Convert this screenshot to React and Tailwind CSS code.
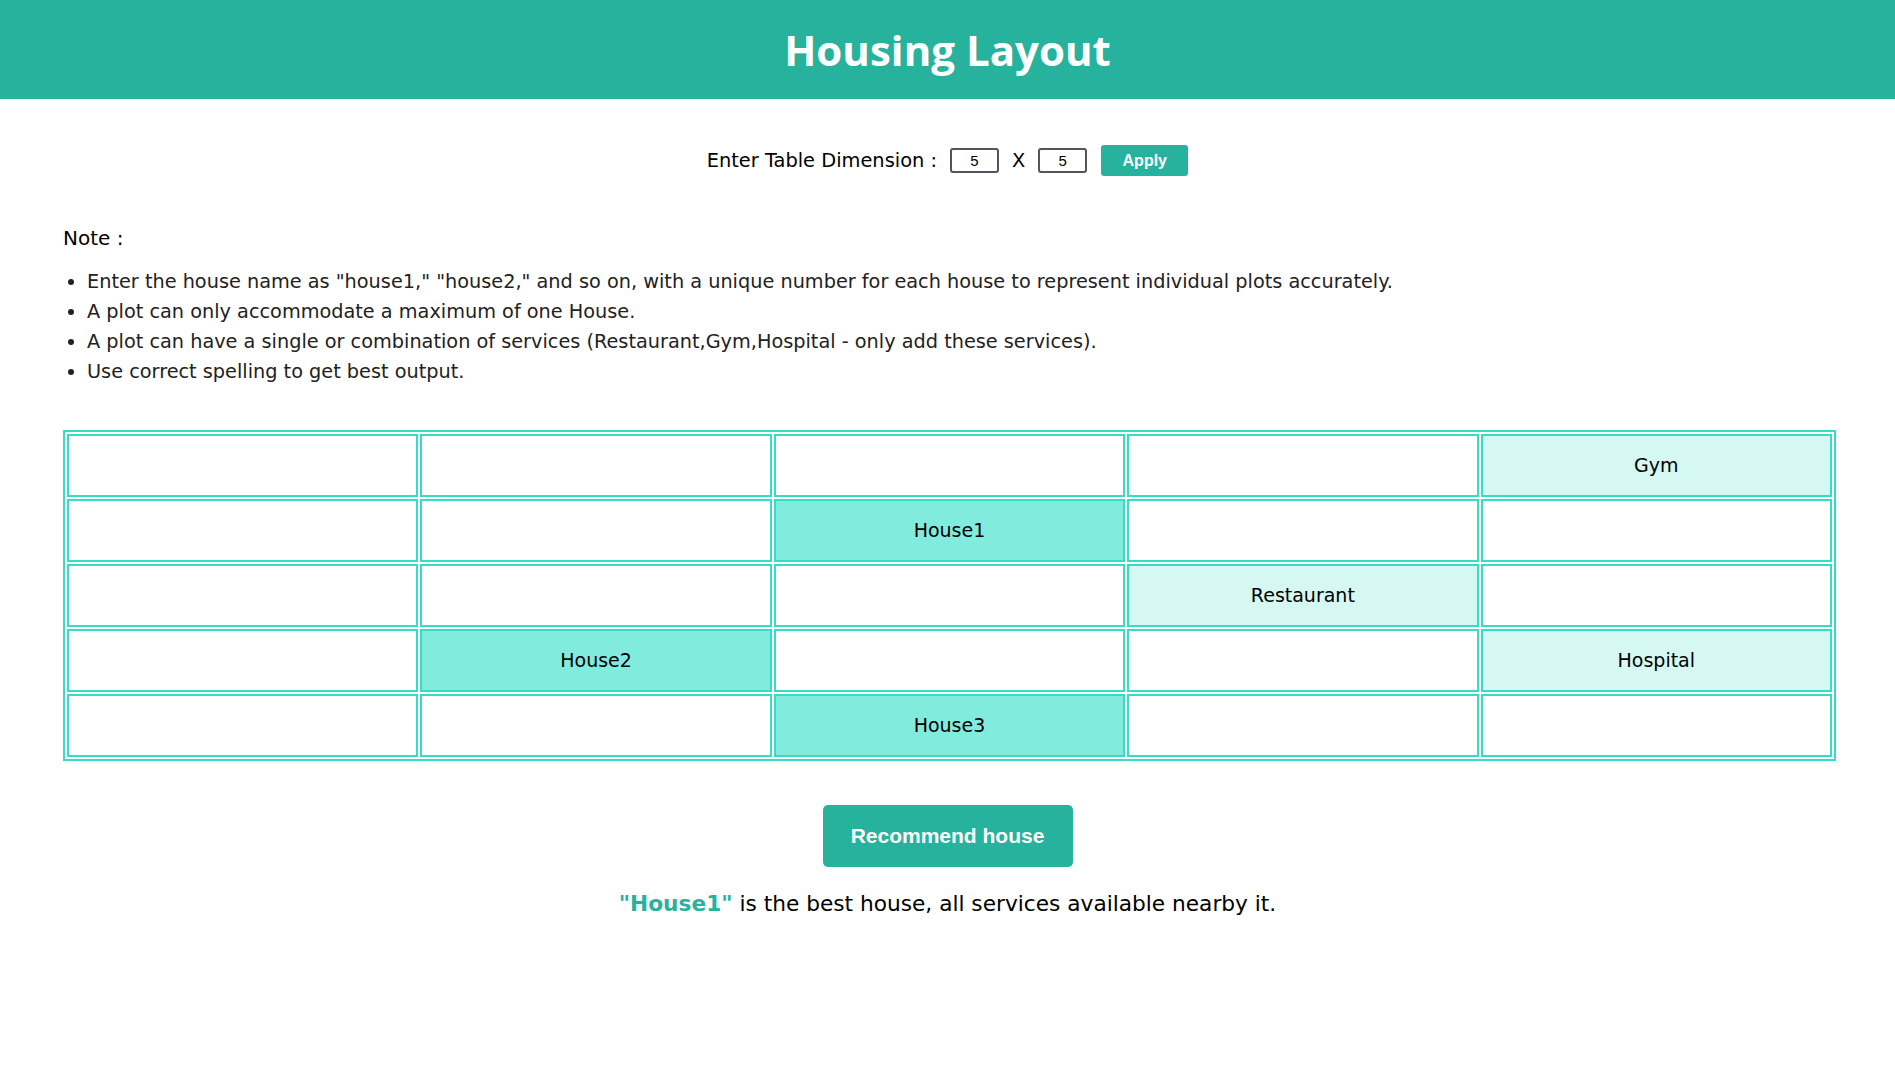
import { useState } from 'react'

const grid = [
  ['', '', '', '', 'Gym'],
  ['', '', 'House1', '', ''],
  ['', '', '', 'Restaurant', ''],
  ['', 'House2', '', '', 'Hospital'],
  ['', '', 'House3', '', ''],
]

const notes = [
  'Enter the house name as "house1," "house2," and so on, with a unique number for each house to represent individual plots accurately.',
  'A plot can only accommodate a maximum of one House.',
  'A plot can have a single or combination of services (Restaurant,Gym,Hospital - only add these services).',
  'Use correct spelling to get best output.',
]

const cellClass = (value) => {
  if (value.toLowerCase().startsWith('house')) return 'bg-[#81ecdd]'
  if (value) return 'bg-[#d5f8f2]'
  return 'bg-white'
}

const App = () => {
  const [rows, setRows] = useState('5')
  const [cols, setCols] = useState('5')

  return (
    <div className="min-h-screen bg-white text-black font-['DejaVu_Sans',sans-serif]">
      <header className="flex h-[99px] items-center justify-center bg-[#27b29d]">
        <h1 className="font-['Open_Sans',sans-serif] text-[42px] font-bold text-white">Housing Layout</h1>
      </header>

      <div className="mt-[46px] flex h-[31px] items-center justify-center text-[19.4px]">
        <span>Enter Table Dimension :</span>
        <input
          value={rows}
          onChange={(e) => setRows(e.target.value)}
          className="ml-[13px] h-[25px] w-[49px] rounded-[3px] border-2 border-[#555] text-center font-['Liberation_Sans',sans-serif] text-[15px] outline-none"
        />
        <span className="mx-[13px]">X</span>
        <input
          value={cols}
          onChange={(e) => setCols(e.target.value)}
          className="h-[25px] w-[49px] rounded-[3px] border-2 border-[#555] text-center font-['Liberation_Sans',sans-serif] text-[15px] outline-none"
        />
        <button className="ml-[14px] h-[31px] w-[87px] rounded-[3px] bg-[#27b29d] font-['Liberation_Sans',sans-serif] text-[16px] font-bold text-white">
          Apply
        </button>
      </div>

      <div className="pl-[63px] pr-[59px]">
        <p className="mt-[47px] text-[20px] leading-[30px]">Note :</p>
        <ul className="mt-[14px] list-disc pl-[24px] text-[19.3px] leading-[30px] text-[#222]">
          {notes.map((n) => (
            <li key={n}>{n}</li>
          ))}
        </ul>

        <table className="mt-[43px] w-full table-fixed border-separate border-spacing-[2px] border-2 border-[#36dcc4]">
          <tbody>
            {grid.map((row, r) => (
              <tr key={r}>
                {row.map((value, c) => (
                  <td
                    key={c}
                    className={`h-[63px] border-2 border-[#36dcc4] text-center text-[19px] ${cellClass(value)}`}
                  >
                    {value}
                  </td>
                ))}
              </tr>
            ))}
          </tbody>
        </table>
      </div>

      <div className="mt-[44px] flex justify-center">
        <button className="h-[62px] w-[250px] rounded-[5px] bg-[#27b29d] font-['Liberation_Sans',sans-serif] text-[21px] font-bold text-white">
          Recommend house
        </button>
      </div>

      <p className="mt-[21px] text-center text-[21.7px]">
        <span className="font-bold text-[#27b29d]">"House1"</span> is the best house, all services available nearby it.
      </p>
    </div>
  )
}

export default App
